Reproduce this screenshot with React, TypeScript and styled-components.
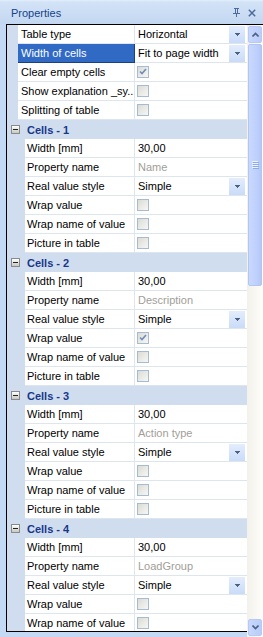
import React from "react";
import styled, { createGlobalStyle } from "styled-components";

const Global = createGlobalStyle`
  html, body { margin: 0; padding: 0; background: #c4d9f3; }
  body { font-family: "Liberation Sans", Arial, sans-serif; font-size: 11px; }
  * { box-sizing: border-box; }
`;

const Panel = styled.div`
  width: 263px;
  height: 637px;
  background: #c4d9f3;
  display: flex;
  flex-direction: column;
  overflow: hidden;
`;

const TitleBar = styled.div`
  height: 24px;
  flex: none;
  display: flex;
  align-items: center;
  padding: 1px 4px 0 11px;
  background: linear-gradient(#e4eefa 0, #d3e3f7 2px, #c3d7f1 100%);
  color: #15428b;
  font-size: 11px;
`;

const Title = styled.span`
  flex: 1;
`;

const TitleIcon = styled.svg`
  display: block;
  margin-left: 8px;
`;

const Body = styled.div`
  display: flex;
  align-items: flex-start;
  padding-left: 6px;
  flex: 1;
`;

const Frame = styled.div`
  width: 241px;
  height: 608px;
  border: 1px solid #000;
  border-right: none;
  overflow: hidden;
  background: #fff;
`;

const Row = styled.div<{ $nested?: boolean }>`
  display: grid;
  grid-template-columns: ${(p) => (p.$nested ? 18 : 11)}px ${(p) => (p.$nested ? 110 : 117)}px 1fr;
  height: 19px;
`;

const Gutter = styled.div`
  background: #d0ddef;
`;

const Label = styled.div<{ $selected?: boolean; $nested?: boolean }>`
  background: ${(p) => (p.$selected ? "#316ac5" : "#fff")};
  color: ${(p) => (p.$selected ? "#fff" : "#000")};
  border-bottom: 1px solid ${(p) => (p.$selected ? "#1d3f7a" : "#dde5ef")};
  border-right: 1px solid ${(p) => (p.$selected ? "#1d3f7a" : "#dde5ef")};
  padding-left: ${(p) => (p.$nested ? 2 : 3)}px;
  line-height: 18px;
  white-space: nowrap;
  overflow: hidden;
`;

const Value = styled.div<{ $muted?: boolean }>`
  display: flex;
  align-items: flex-start;
  background: #fff;
  color: ${(p) => (p.$muted ? "#a19e98" : "#000")};
  border-bottom: 1px solid #dde5ef;
  padding-left: 3px;
  line-height: 18px;
  white-space: nowrap;
  overflow: hidden;
`;

const ValueText = styled.span`
  flex: 1;
`;

const DropButton = styled.div`
  width: 16px;
  height: 17px;
  margin: 1px 2px 0 0;
  background: linear-gradient(#e3edfc, #c9dbf8);
  display: flex;
  align-items: center;
  justify-content: center;
`;

const Check = styled.div`
  width: 12px;
  height: 12px;
  margin: 3px 0 0 -1px;
  border: 1px solid #a6bad2;
  background: linear-gradient(135deg, #dcdcd6, #f6f6f4);
  display: flex;
  align-items: center;
  justify-content: center;
`;

const Header = styled.div`
  height: 19px;
  display: flex;
  align-items: center;
  background: #d0ddef;
  color: #17388a;
  font-weight: bold;
  padding-left: 4px;
`;

const Toggle = styled.div`
  width: 9px;
  height: 9px;
  border: 1px solid #8a8a8a;
  background: linear-gradient(#ffffff, #c8c8c0);
  margin-right: 7px;
  display: flex;
  align-items: center;
  justify-content: center;
  &::after {
    content: "";
    width: 5px;
    height: 1px;
    background: #222;
  }
`;

const Scroll = styled.div`
  width: 16px;
  height: 613px;
  border-top: 1px solid #000;
  display: flex;
  flex-direction: column;
  padding: 1px;
  background: linear-gradient(90deg, #f3f1ea, #fdfdfb);
`;

const ScrollBtn = styled.div`
  height: 17px;
  flex: none;
  border: 1px solid #b7caf5;
  border-radius: 2px;
  background: linear-gradient(90deg, #c8d7fc, #b9cdfa);
  display: flex;
  align-items: center;
  justify-content: center;
`;

const Thumb = styled.div`
  height: 242px;
  flex: none;
  margin-top: 1px;
  border: 1px solid #b2c6f4;
  border-radius: 2px;
  background: linear-gradient(90deg, #cad8fd, #bccffb 70%, #b4c8f8);
  display: flex;
  align-items: center;
  justify-content: center;
`;

const Track = styled.div`
  flex: 1;
`;

const Arrow = () => (
  <svg width="5" height="3" viewBox="0 0 5 3">
    <path d="M0 0h5v1H0zM1 1h3v1H1zM2 2h1v1H2z" fill="#4d6185" />
  </svg>
);

const Chevron = ({ down }: { down?: boolean }) => (
  <svg width="7" height="5" viewBox="0 0 7 5" style={down ? { transform: "rotate(180deg)" } : undefined}>
    <path d="M0.5 4.5L3.5 1.5L6.5 4.5" stroke="#4d6185" strokeWidth="1.6" fill="none" />
  </svg>
);

const Grip = () => (
  <svg width="7" height="8" viewBox="0 0 7 8">
    {[0, 2, 4, 6].map((y) => (
      <g key={y}>
        <rect x="0" y={y} width="6" height="1" fill="#eef4fe" />
        <rect x="1" y={y + 1} width="6" height="1" fill="#8caae6" />
      </g>
    ))}
  </svg>
);

const CheckMark = () => (
  <svg width="8" height="8" viewBox="0 0 8 8">
    <path d="M1 3.5L3 5.5L7 1" stroke="#6f8cbd" strokeWidth="1.6" fill="none" />
  </svg>
);

type Prop = {
  label: string;
  kind: "text" | "drop" | "check";
  value?: string;
  checked?: boolean;
  muted?: boolean;
  selected?: boolean;
};

const PropRow = ({ p, nested }: { p: Prop; nested?: boolean }) => (
  <Row $nested={nested}>
    <Gutter />
    <Label $selected={p.selected} $nested={nested}>{p.label}</Label>
    <Value $muted={p.muted}>
      {p.kind === "check" ? (
        <Check>{p.checked && <CheckMark />}</Check>
      ) : (
        <ValueText>{p.value}</ValueText>
      )}
      {p.kind === "drop" && (
        <DropButton>
          <Arrow />
        </DropButton>
      )}
    </Value>
  </Row>
);

const top: Prop[] = [
  { label: "Table type", kind: "drop", value: "Horizontal" },
  { label: "Width of cells", kind: "drop", value: "Fit to page width", selected: true },
  { label: "Clear empty cells", kind: "check", checked: true },
  { label: "Show explanation _sy...", kind: "check" },
  { label: "Splitting of table", kind: "check" },
];

const cells = [
  { name: "Name", wrap: false, rows: 6 },
  { name: "Description", wrap: true, rows: 6 },
  { name: "Action type", wrap: false, rows: 6 },
  { name: "LoadGroup", wrap: false, rows: 5 },
];

const cellProps = (name: string, wrap: boolean): Prop[] => [
  { label: "Width [mm]", kind: "text", value: "30,00" },
  { label: "Property name", kind: "text", value: name, muted: true },
  { label: "Real value style", kind: "drop", value: "Simple" },
  { label: "Wrap value", kind: "check", checked: wrap },
  { label: "Wrap name of value", kind: "check" },
  { label: "Picture in table", kind: "check" },
];

export default function App() {
  return (
    <>
      <Global />
      <Panel>
        <TitleBar>
          <Title>Properties</Title>
          <TitleIcon width="7" height="9" viewBox="0 0 7 9">
            <path d="M1 0h5v1H1zM2 1h1v4H2zM4 1h1v4H4zM0 5h7v1H0zM3 6h1v3H3z" fill="#4d6c9c" />
          </TitleIcon>
          <TitleIcon width="8" height="8" viewBox="0 0 8 8" style={{ marginRight: 3 }}>
            <path d="M0.8 0.8L7.2 7.2M7.2 0.8L0.8 7.2" stroke="#4d6c9c" strokeWidth="1.5" />
          </TitleIcon>
        </TitleBar>
        <Body>
          <Frame>
            {top.map((p) => (
              <PropRow key={p.label} p={p} />
            ))}
            {cells.map((c, i) => (
              <React.Fragment key={i}>
                <Header>
                  <Toggle />
                  Cells - {i + 1}
                </Header>
                {cellProps(c.name, c.wrap)
                  .slice(0, c.rows)
                  .map((p) => (
                    <PropRow key={p.label} p={p} nested />
                  ))}
              </React.Fragment>
            ))}
          </Frame>
          <Scroll>
            <ScrollBtn>
              <Chevron />
            </ScrollBtn>
            <Thumb>
              <Grip />
            </Thumb>
            <Track />
            <ScrollBtn>
              <Chevron down />
            </ScrollBtn>
          </Scroll>
        </Body>
      </Panel>
    </>
  );
}
